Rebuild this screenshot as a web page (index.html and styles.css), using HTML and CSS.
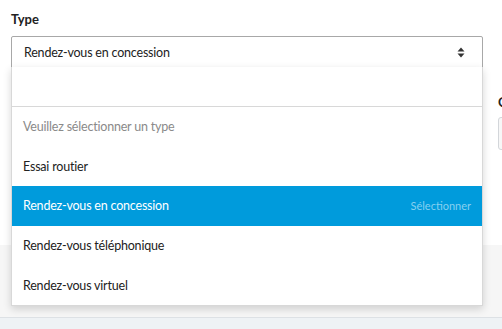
FILE: index.html
```html
<!DOCTYPE html>
<html lang="fr">
<head>
<meta charset="utf-8">
<link rel="stylesheet" href="styles.css">
</head>
<body>
<div class="page">
  <section class="card">
    <div class="row">
      <div class="field field-type">
        <label class="label">Type</label>
        <div class="select-wrap">
          <div class="select">
            <span class="select-value">Rendez-vous en concession</span>
            <svg class="arrows" width="8" height="11" viewBox="0 0 8 11"><path d="M4 0.5 L7.5 4.5 H0.5 Z M4 10.5 L7.5 6.5 H0.5 Z" fill="#333"/></svg>
          </div>
          <div class="dropdown">
            <div class="search"></div>
            <ul class="options">
              <li class="option placeholder">Veuillez sélectionner un type</li>
              <li class="option">Essai routier</li>
              <li class="option active"><span>Rendez-vous en concession</span><span class="hint">Sélectionner</span></li>
              <li class="option">Rendez-vous téléphonique</li>
              <li class="option">Rendez-vous virtuel</li>
            </ul>
          </div>
        </div>
      </div>
      <div class="field field-other">
        <label class="label">Canal</label>
        <div class="input"></div>
      </div>
    </div>
  </section>
  <section class="gray"></section>
  <footer class="footer"></footer>
</div>
</body>
</html>
```
FILE: styles.css
```css
* { box-sizing: border-box; }
html, body { margin: 0; padding: 0; }
body {
  font-family: Lato, "Liberation Sans", sans-serif;
  color: #333;
  width: 502px;
  height: 329px;
  overflow: hidden;
  background: #eef2f5;
}
.page { display: flex; flex-direction: column; }
.card {
  background: #fff;
  height: 245px;
  padding: 11px 0 0 11px;
}
.row { display: flex; gap: 15px; }
.field-type { width: 472px; flex: none; }
.field-other { padding-top: 83px; }
.label {
  display: block;
  font-weight: 700;
  font-size: 13px;
  line-height: 16px;
  color: #222;
  margin-bottom: 9px;
}
.field-other .label { margin-bottom: 7px; }
.input {
  width: 40px;
  height: 33px;
  border: 1px solid #d3d6da;
  border-radius: 3px;
  background: #f7f7f7;
}
.select-wrap { position: relative; }
.select {
  height: 32px;
  border: 1px solid #a8a8a8;
  border-radius: 2px 2px 0 0;
  display: flex;
  align-items: center;
  justify-content: space-between;
  padding: 0 17px 0 12px;
  font-size: 12.5px;
  letter-spacing: -0.2px;
  color: #222;
}
.arrows { display: block; }
.dropdown {
  position: absolute;
  left: 0;
  top: 31px;
  width: 472px;
  background: #fff;
  border: 1px solid #d8d8d8;
  border-top: none;
  box-shadow: 0 3px 8px rgba(0,0,0,0.16);
  z-index: 2;
}
.search {
  height: 40px;
  border-bottom: 1px solid #d8d8d8;
}
.options { list-style: none; margin: 0; padding: 0; }
.option {
  height: 39.6px;
  display: flex;
  align-items: center;
  justify-content: space-between;
  padding: 0 11px 0 11px;
  font-size: 12.5px;
  letter-spacing: -0.2px;
  color: #222;
}
.option.placeholder { color: #8a8a8a; }
.option.active { background: #009bdc; color: #fff; }
.hint { font-size: 11px; letter-spacing: 0; color: #86d0f0; }
.gray {
  height: 73px;
  background: #f6f6f6;
  border-bottom: 1px solid #dde1e5;
}
.footer { height: 11px; background: #eef2f5; }
```
